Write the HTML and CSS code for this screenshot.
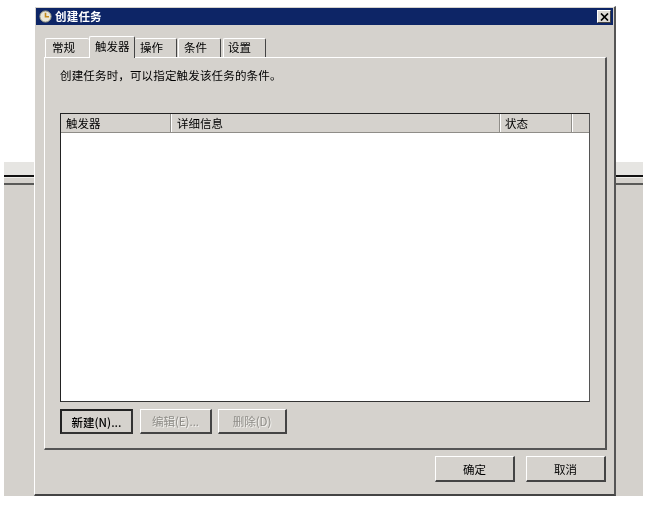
FILE: index.html
```html
<!DOCTYPE html>
<html lang="zh">
<head>
<meta charset="utf-8">
<title>创建任务</title>
<link rel="stylesheet" href="styles.css">
</head>
<body>
<div class="desktop">
  <div class="backdrop backdrop-left"><div class="bd-light"></div><div class="bd-black"></div><div class="bd-band"></div><div class="bd-dark"></div></div>
  <div class="backdrop backdrop-right"><div class="bd-light"></div><div class="bd-black"></div><div class="bd-band"></div><div class="bd-dark"></div></div>
  <section class="dialog">
    <header class="titlebar">
      <svg class="clock" width="13" height="13" viewBox="0 0 13 13"><circle cx="6.5" cy="6.5" r="5.6" fill="#e8e6d8" stroke="#9a9a86"/><path d="M6.5 2.8V6.8H10" fill="none" stroke="#c48a1c" stroke-width="1.6"/></svg>
      <span class="title">创建任务</span>
      <button class="close" aria-label="关闭"><svg width="9" height="8" viewBox="0 0 9 8"><path d="M1 0.5L8 7.5M8 0.5L1 7.5" stroke="#000" stroke-width="1.7" fill="none"/></svg></button>
    </header>
    <nav class="tabs">
      <div class="tab tab-general">常规</div>
      <div class="tab tab-active">触发器</div>
      <div class="tab tab-action">操作</div>
      <div class="tab tab-cond">条件</div>
      <div class="tab tab-set">设置</div>
    </nav>
    <div class="pane">
      <p class="intro">创建任务时，可以指定触发该任务的条件。</p>
      <div class="list">
        <div class="list-head">
          <div class="col col-trigger">触发器</div>
          <div class="col col-detail">详细信息</div>
          <div class="col col-status">状态</div>
          <div class="col col-rest"></div>
        </div>
      </div>
      <div class="actions">
        <button class="btn btn-new">新建(N)...</button>
        <button class="btn btn-edit disabled">编辑(E)...</button>
        <button class="btn btn-del disabled">删除(D)</button>
      </div>
    </div>
    <footer class="footer">
      <button class="btn btn-foot">确定</button>
      <button class="btn btn-foot">取消</button>
    </footer>
  </section>
</div>
</body>
</html>
```
FILE: styles.css
```css
* { box-sizing: border-box; }
html, body { margin: 0; padding: 0; background: #fff; }
body { font-family: "Noto Sans CJK SC", "Liberation Sans", sans-serif; font-size: 11.5px; color: #000; }
.desktop { position: relative; width: 656px; height: 506px; overflow: hidden; filter: blur(0.35px); }
.backdrop { position: absolute; top: 162px; height: 334px; background: #d4d1cc; }
.backdrop-left { left: 4px; width: 30px; }
.backdrop-right { left: 616px; width: 27px; }
.bd-light { height: 13px; background: #e6e5e2; }
.bd-black { height: 2px; background: #111; }
.bd-band { height: 6px; background: #d4d1cc; border-top: 1px solid #efeeea; }
.bd-dark { height: 2px; background: #5a5a58; }
.dialog { position: absolute; left: 34px; top: 6px; width: 582px; height: 490px; display: flex; flex-direction: column; background: #d5d2cd; border: 1px solid #fff; border-right: 2px solid #555; border-bottom: 2px solid #444; padding: 1px 0 0 1px; }
.titlebar { height: 17px; margin-right: 1px; display: flex; align-items: center; background: #0d2566; padding: 0 2px 0 3px; flex: none; }
.clock { flex: none; }
.title { margin-left: 3px; color: #fff; font-size: 11.5px; font-weight: 700; line-height: 17px; letter-spacing: 0.2px; }
.close { margin-left: auto; width: 14px; height: 13px; padding: 0; display: flex; align-items: center; justify-content: center; background: #dedbd6; border: 1px solid; border-color: #fff #444 #444 #fff; }
.tabs { display: flex; align-items: flex-end; height: 32px; padding-left: 9px; flex: none; position: relative; z-index: 1; }
.tab { height: 19px; border-top: 1px solid #fff; border-left: 1px solid #fff; border-right: 1px solid #444; border-top-left-radius: 2px; border-top-right-radius: 2px; line-height: 17px; padding-left: 6px; background: #d5d2cd; }
.tab-general { width: 44px; border-right: 0; }
.tab-active { width: 46px; height: 22px; margin-bottom: -1px; padding-left: 5px; line-height: 19px; }
.tab-action { width: 42px; border-left: 0; padding-left: 5px; }
.tab-cond { width: 43px; margin-left: 1px; padding-left: 5px; }
.tab-set { width: 43px; margin-left: 2px; padding-left: 4px; }
.pane { margin-left: 8px; width: 563px; height: 393px; border: 1px solid; border-color: #fff #555 #555 #fff; border-right-width: 2px; border-bottom-width: 2px; padding: 0 15px; flex: none; display: flex; flex-direction: column; }
.intro { margin: 9px 0 0; height: 46px; line-height: 16px; letter-spacing: 0.16px; }
.list { width: 530px; height: 289px; background: #fff; border: 1px solid; border-color: #222 #555 #333 #222; flex: none; }
.list-head { height: 19px; display: flex; background: #d5d2cd; border-bottom: 1px solid #8f8d88; }
.col { height: 18px; padding-left: 5px; line-height: 18px; border-right: 1px solid #8f8d88; box-shadow: 1px 0 0 #fff; }
.col-trigger { width: 110px; }
.col-detail { width: 329px; padding-left: 6px; }
.col-status { width: 72px; }
.col-rest { flex: 1; border-right: 0; box-shadow: none; }
.actions { display: flex; margin-top: 7px; }
.btn { height: 25px; padding: 0; font-family: inherit; font-size: 11.5px; color: #000; background: #d5d2cd; border: 1px solid; border-color: #fff #444 #444 #fff; border-right-width: 2px; border-bottom-width: 2px; }
.btn-new { width: 73px; border: 2px solid #222; border-color: #222 #333 #333 #222; font-weight: 500; }
.btn-edit { width: 72px; margin-left: 7px; }
.btn-del { width: 69px; margin-left: 6px; }
.disabled { color: #8f8d88; text-shadow: 1px 1px 0 #f2f1ee; }
.footer { display: flex; justify-content: flex-end; gap: 11px; margin-top: 6px; padding-right: 8px; flex: none; }
.btn-foot { width: 80px; height: 26px; }
```
